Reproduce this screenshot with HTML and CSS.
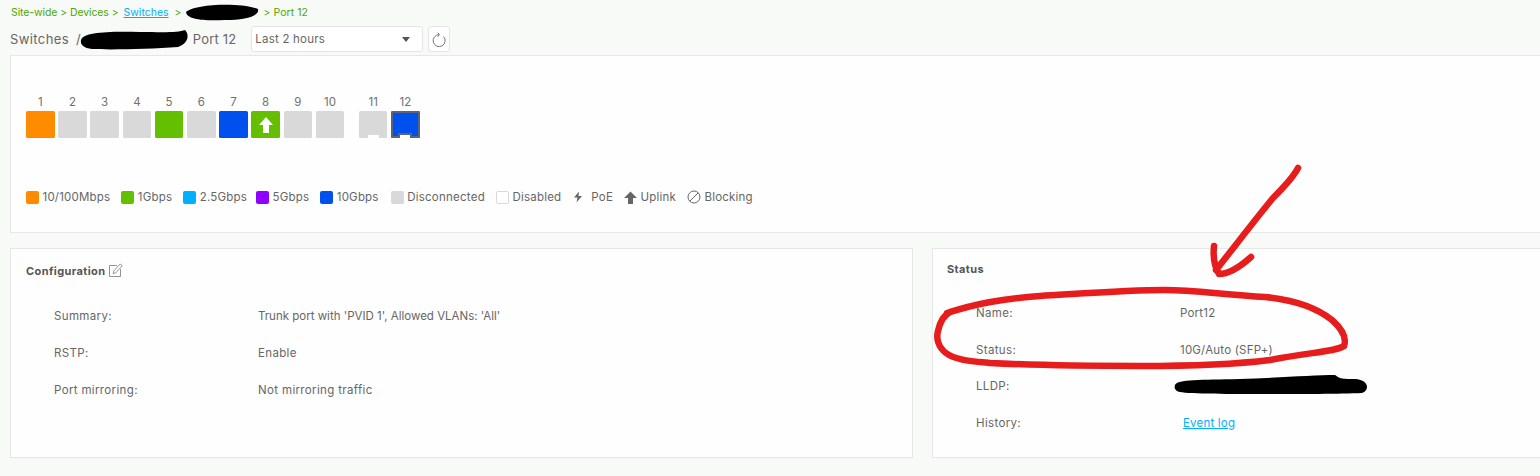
FILE: index.html
```html
<!DOCTYPE html>
<html lang="en">
<head>
<meta charset="utf-8">
<title>Port 12</title>
<link rel="stylesheet" href="styles.css">
</head>
<body>
<div class="page">
  <nav class="crumbs">
    <span>Site-wide &gt; Devices &gt;</span>
    <a class="link" href="#">Switches</a>
    <span class="crumb-gap">&gt;</span>
    <span class="crumb-last">&gt; Port 12</span>
  </nav>
  <header class="titlebar">
    <span class="title-name">Switches</span>
    <span class="title-slash">/</span>
    <span class="title-port">Port 12</span>
    <div class="select"><span>Last 2 hours</span><i class="caret"></i></div>
    <button class="refresh" aria-label="Refresh">
      <svg width="14" height="15" viewBox="0 0 14 15" fill="none" stroke="#777" stroke-width="1"><path d="M7 2.600A6 6 0 1 0 11.600 4.600"/><path d="M5.600 .6 7.600 2.600 5.600 4.800"/></svg>
    </button>
  </header>

  <section class="panel panel-ports">
    <div class="ports">
      <div class="port"><span>1</span><b class="sq orange"></b></div>
      <div class="port"><span>2</span><b class="sq"></b></div>
      <div class="port"><span>3</span><b class="sq"></b></div>
      <div class="port"><span>4</span><b class="sq"></b></div>
      <div class="port"><span>5</span><b class="sq green"></b></div>
      <div class="port"><span>6</span><b class="sq"></b></div>
      <div class="port"><span>7</span><b class="sq blue"></b></div>
      <div class="port"><span>8</span><b class="sq green"><svg class="up" width="14" height="16" viewBox="0 0 14 16"><path d="M7 0 14 8H10V16H4V8H0Z" fill="#fff"/></svg></b></div>
      <div class="port"><span>9</span><b class="sq"></b></div>
      <div class="port"><span>10</span><b class="sq"></b></div>
      <div class="port sfp"><span>11</span><b class="sq"><i class="notch"></i></b></div>
      <div class="port"><span>12</span><b class="sq blue selected"><i class="notch notch-sel"></i></b></div>
    </div>
    <div class="legend">
      <div class="li"><i class="sw orange"></i>10/100Mbps</div>
      <div class="li"><i class="sw green"></i>1Gbps</div>
      <div class="li"><i class="sw sky"></i>2.5Gbps</div>
      <div class="li li-5g"><i class="sw purple"></i>5Gbps</div>
      <div class="li"><i class="sw blue"></i>10Gbps</div>
      <div class="li li-disc"><i class="sw grey"></i>Disconnected</div>
      <div class="li"><i class="sw off"></i>Disabled</div>
      <div class="li li-poe"><svg width="10" height="12" viewBox="0 0 10 12"><path d="M6 .5 1 6.500H4.500L3.500 11.500 9 5H5.500Z" fill="#666"/></svg>PoE</div>
      <div class="li"><svg width="13" height="13" viewBox="0 0 13 13"><path d="M6.500 .5 13 7H9V13H4V7H0Z" fill="#666"/></svg>Uplink</div>
      <div class="li"><svg width="14" height="14" viewBox="0 0 14 14" fill="none" stroke="#666" stroke-width="1"><circle cx="7" cy="7" r="6"/><path d="M2.800 11.200 11.200 2.800"/></svg>Blocking</div>
    </div>
  </section>

  <div class="columns">
    <section class="panel panel-config">
      <h2 class="h h-config">Configuration
        <svg class="edit" width="14" height="14" viewBox="0 0 14 14" fill="none" stroke="#777" stroke-width=".8"><path d="M8 2.500H.5V13.500H11.500V6"/><path d="M4.200 10.600 4.700 8 11.200 1 13.200 2.800 6.800 9.900Z"/></svg>
      </h2>
      <dl class="kv kv-config">
        <dt>Summary:</dt><dd class="tight">Trunk port with 'PVID 1', Allowed VLANs: 'All'</dd>
        <dt>RSTP:</dt><dd class="wide">Enable</dd>
        <dt>Port mirroring:</dt><dd class="wide">Not mirroring traffic</dd>
      </dl>
    </section>
    <section class="panel panel-status">
      <h2 class="h">Status</h2>
      <dl class="kv kv-status">
        <dt>Name:</dt><dd>Port12</dd>
        <dt>Status:</dt><dd>10G/Auto (SFP+)</dd>
        <dt>LLDP:</dt><dd></dd>
        <dt>History:</dt><dd><a class="link event" href="#">Event log</a></dd>
      </dl>
    </section>
  </div>
</div>

<svg class="marks" width="1540" height="476" viewBox="0 0 1540 476" fill="none">
  <path d="M186 12C194 4 240 2 258 9C260 16 246 20 225 20C205 21 187 20 186 12Z" fill="#000"/>
  <path d="M81 40C83 32 110 31 140 32C160 32 178 33 185 30C190 35 188 44 178 47C150 49 110 50 92 49C84 48 80 45 81 40Z" fill="#000"/>
  <path d="M1175 385C1178 379 1200 380 1240 379C1275 378 1315 375 1335 375C1340 378 1338 379 1355 379C1369 380 1370 390 1362 393C1340 394 1300 394 1270 394C1230 394 1190 394 1180 392C1175 391 1174 388 1175 385Z" fill="#000"/>
  <path d="M1298 168C1294 176 1285 186 1273 198C1258 216 1235 246 1216 270" stroke="#e71d1d" stroke-width="6.5" stroke-linecap="round" stroke-linejoin="round"/>
  <path d="M1214 246C1213 256 1214 266 1219 274C1230 274 1241 266 1251 257" stroke="#e71d1d" stroke-width="6.5" stroke-linecap="round" stroke-linejoin="round"/>
  <path d="M947 313C975 304 1000 299 1040 296C1090 293 1130 290 1165 290C1195 290 1225 295 1265 297C1295 300 1318 309 1332 320C1342 329 1347 338 1344 346C1335 352 1310 352 1270 360C1230 365 1190 366 1140 366C1090 366 1030 365 990 363C970 361 955 360 946 353C938 347 936 338 938 331C940 322 944 315 950 312" stroke="#e71d1d" stroke-width="6.5" stroke-linecap="round" stroke-linejoin="round"/>
</svg>
</body>
</html>
```

FILE: styles.css
```css
* { box-sizing: border-box; }
html, body { margin: 0; height: 100%; overflow: hidden; }
body {
  background: #f8faf8;
  color: #666;
  font-family: Inter, "Liberation Sans", sans-serif;
  font-size: 11.5px;
  position: relative;
}
.page { width: 1540px; height: 476px; padding-left: 10px; overflow: hidden; }
.link { color: #00aeff; text-decoration: underline; }

.crumbs {
  height: 26px;
  padding: 6px 0 0 1px;
  display: flex;
  color: #4fa800;
  font-size: 10.5px;
  line-height: 13px;
  letter-spacing: -.1px;
}
.crumbs .link { margin-left: 5px; letter-spacing: 0; }
.crumb-gap { margin-left: 6px; }
.crumb-last { margin-left: 82px; letter-spacing: .05px; }

.titlebar { height: 29px; display: flex; align-items: flex-start; color: #666; }
.title-name, .title-slash, .title-port { font-size: 13px; line-height: 26px; }
.title-name { letter-spacing: .4px; }
.title-slash { margin-left: 7px; }
.title-port { margin-left: 112px; letter-spacing: .2px; }
.select {
  margin-left: 15px;
  width: 172px;
  height: 26px;
  padding: 0 12px 0 3px;
  display: flex;
  align-items: center;
  justify-content: space-between;
  background: #fff;
  border: 1px solid #e4e6e4;
  border-radius: 3px;
  font-size: 11.5px;
  letter-spacing: .2px;
}
.caret { border: 4px solid transparent; border-top: 5px solid #555; border-bottom: 0; }
.refresh {
  margin-left: 5px;
  width: 22px;
  height: 26px;
  padding: 0;
  display: flex;
  align-items: center;
  justify-content: center;
  background: #fff;
  border: 1px solid #e4e6e4;
  border-radius: 3px;
}

.panel { background: #fefefe; border: 1px solid #e6e8e6; flex: none; }
.panel-ports { width: 1560px; height: 178px; padding: 40px 0 0 15px; }

.ports { display: flex; gap: 3.6px; }
.port { width: 28.6px; display: flex; flex-direction: column; align-items: center; font-size: 11.5px; }
.port span { height: 15px; line-height: 13px; color: #707070; }
.sfp { margin-left: 11px; }
.sq {
  display: flex;
  align-items: center;
  justify-content: center;
  width: 100%;
  height: 27px;
  background: #d9d9d9;
  border-radius: 1.5px;
  position: relative;
  overflow: hidden;
}
.notch {
  position: absolute;
  left: 9px;
  bottom: 0;
  width: 11px;
  height: 3px;
  background: #fefefe;
}
.sq.selected { box-shadow: inset 0 0 0 2px #5a6478; }
.notch-sel { left: 7.3px; width: 14px; height: 5px; background: #fefefe; border: 2px solid #5a6478; border-bottom: 0; }
.orange { background: #ff8c00; }
.green { background: #64bf00; }
.blue { background: #0050ee; }
.sky { background: #00b0ff; }
.purple { background: #8f00ff; }
.grey { background: #d9d9d9; }
.off { background: #fff; border: 1px solid #d9d9d9; }

.legend { display: flex; gap: 11px; margin-top: 52px; height: 14px; align-items: center; letter-spacing: .2px; }
.li { display: flex; align-items: center; gap: 3.5px; white-space: nowrap; }
.li-5g { margin-left: -2px; }
.li-disc { margin-left: 1px; letter-spacing: .25px; }
.li-poe { gap: 8px; margin-left: 1px; }
.li svg { flex: none; }
.sw { width: 13px; height: 13px; border-radius: 2px; flex: none; }

.columns { display: flex; gap: 19px; margin-top: 15px; }
.panel-config { width: 903px; height: 210px; padding: 0 15px; }
.panel-status { width: 630px; height: 210px; padding: 0 14px; }
.h { margin: 0; font-size: 11px; font-weight: 700; color: #555; line-height: 14px; padding-top: 13px; letter-spacing: .4px; }
.h-config { display: flex; align-items: center; gap: 3px; padding-top: 15px; }
.edit { margin-top: -3px; }

.kv { margin: 0; display: grid; }
.kv dt, .kv dd { margin: 0; line-height: 14px; }
.kv dt { letter-spacing: .35px; }
.kv dd { letter-spacing: .2px; }
.kv .tight { letter-spacing: 0; }
.kv .wide { letter-spacing: .35px; }
.kv-config { grid-template-columns: 204px 1fr; row-gap: 23px; margin: 31px 0 0 28px; }
.kv-status { grid-template-columns: 204px 1fr; row-gap: 22.6px; margin: 30px 0 0 29px; }
.event { margin-left: 3px; }

.marks { position: absolute; left: 0; top: 0; pointer-events: none; }
```
